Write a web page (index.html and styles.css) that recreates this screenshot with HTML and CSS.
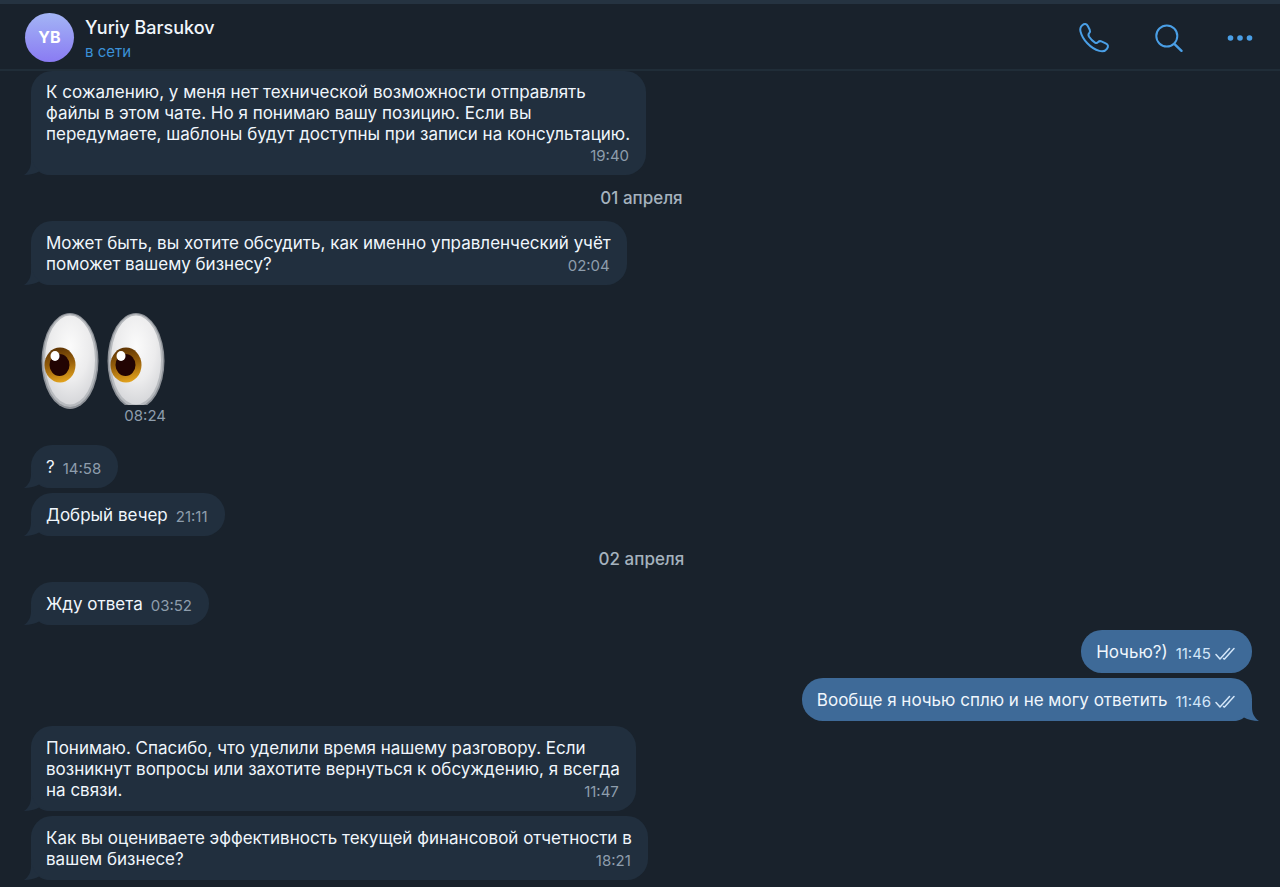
FILE: index.html
```html
<!DOCTYPE html>
<html lang="ru">

  <head>
    <meta charset="utf-8">
    <title>Yuriy Barsukov</title>
    <link rel="stylesheet" href="styles.css">
  </head>

  <body>

    <!-- shared shapes -->
    <svg class="defs" width="0" height="0" aria-hidden="true">
      <symbol id="tail" viewBox="0 0 27 20">
        <path d="M7 0 V6 C7 12 5 16.500 0 20 C6 20 11 18.800 15 16.500 C17.500 18.800 21 20 25 20 L27 20 L27 0 Z"/>
      </symbol>
      <symbol id="checks" viewBox="0 0 20 14">
        <path d="M1 7.500 L5 12 L14.500 1.500 M8.500 11.500 L9.500 12 L19 1.500" fill="none" stroke="currentColor" stroke-width="1.500" stroke-linecap="round" stroke-linejoin="round"/>
      </symbol>
    </svg>

    <header class="header">
      <div class="avatar">YB</div>
      <div class="who">
        <h1>Yuriy Barsukov</h1>
        <p>в сети</p>
      </div>
      <div class="actions">
        <button type="button" aria-label="Позвонить">
          <svg width="32" height="32" viewBox="0 0 32 32">
            <path d="M4.300 3.200 C6.500 1.300 8.600 1.700 9.800 4 L11.700 7.800 C12.400 9.200 12.200 10 11.200 11.100 C10 12.400 10 13 11.100 14.800 C12.800 17.400 14.600 19.100 17 20.600 C18.300 21.400 19 21.300 20 20.200 C21.100 19 22 18.800 23.400 19.400 L27.700 21.300 C30.300 22.500 30.700 24.500 28.900 26.900 C27.300 29.200 24.600 29.800 21.300 28.900 C12.500 26.500 4.500 17.500 2.500 9.500 C1.900 7 2.500 4.700 4.300 3.200 Z"/>
          </svg>
        </button>
        <button type="button" aria-label="Поиск">
          <svg width="32" height="32" viewBox="0 0 32 32">
            <circle cx="15.800" cy="14" r="10.500"/>
            <path d="M23.300 21.800 L30.500 28.800" stroke-width="2.400"/>
          </svg>
        </button>
        <button type="button" aria-label="Меню">
          <svg class="dots" width="32" height="32" viewBox="0 0 32 32">
            <circle cx="6.500" cy="16" r="2.800"/>
            <circle cx="16" cy="16" r="2.800"/>
            <circle cx="25.500" cy="16" r="2.800"/>
          </svg>
        </button>
      </div>
    </header>

    <main class="chat">

      <div class="msg stacked">
        <p>К сожалению, у меня нет технической возможности отправлять<br>файлы в этом чате. Но я понимаю вашу позицию. Если вы<br>передумаете, шаблоны будут доступны при записи на консультацию.</p>
        <time>19:40</time>
        <svg class="tail"><use href="#tail"/></svg>
      </div>

      <div class="date">01 апреля</div>

      <div class="msg multi">
        <p>Может быть, вы хотите обсудить, как именно управленческий учёт<br>поможет вашему бизнесу?</p>
        <time>02:04</time>
        <svg class="tail"><use href="#tail"/></svg>
      </div>

      <div class="sticker">
        <svg width="126" height="98" viewBox="0 0 126 98" role="img" aria-label="Глаза">
          <defs>
            <radialGradient id="white" cx="0.500" cy="0.350" r="0.650">
              <stop offset="0" stop-color="#fbfbfb"/>
              <stop offset="0.600" stop-color="#ececed"/>
              <stop offset="1" stop-color="#d6d7da"/>
            </radialGradient>
            <linearGradient id="iris" x1="0.300" y1="0" x2="0.500" y2="1">
              <stop offset="0" stop-color="#5b3204"/>
              <stop offset="0.500" stop-color="#98600b"/>
              <stop offset="1" stop-color="#e2a21d"/>
            </linearGradient>
            <clipPath id="cut"><path d="M0 0 H126 V93 H66 V98 H0 Z"/></clipPath>
            <g id="eye">
              <ellipse cx="29" cy="49" rx="28.500" ry="48" fill="#8e9298"/>
              <ellipse cx="29" cy="48.500" rx="27" ry="46.500" fill="#b7babe"/>
              <ellipse cx="29" cy="48" rx="25" ry="44.500" fill="url(#white)"/>
              <ellipse cx="19" cy="53" rx="15.500" ry="17.500" fill="url(#iris)"/>
              <ellipse cx="18.500" cy="53" rx="10" ry="11" fill="#220403"/>
              <ellipse cx="14" cy="44" rx="4.500" ry="5" fill="#fff"/>
            </g>
          </defs>
          <g clip-path="url(#cut)">
            <use href="#eye"/>
            <use href="#eye" x="66"/>
          </g>
        </svg>
        <time>08:24</time>
      </div>

      <div class="msg">
        <p>?</p>
        <time>14:58</time>
        <svg class="tail"><use href="#tail"/></svg>
      </div>

      <div class="msg">
        <p>Добрый вечер</p>
        <time>21:11</time>
        <svg class="tail"><use href="#tail"/></svg>
      </div>

      <div class="date">02 апреля</div>

      <div class="msg">
        <p>Жду ответа</p>
        <time>03:52</time>
        <svg class="tail"><use href="#tail"/></svg>
      </div>

      <div class="msg out">
        <p>Ночью?)</p>
        <time>11:45 <svg class="checks"><use href="#checks"/></svg></time>
      </div>

      <div class="msg out">
        <p>Вообще я ночью сплю и не могу ответить</p>
        <time>11:46 <svg class="checks"><use href="#checks"/></svg></time>
        <svg class="tail"><use href="#tail"/></svg>
      </div>

      <div class="msg multi">
        <p>Понимаю. Спасибо, что уделили время нашему разговору. Если<br>возникнут вопросы или захотите вернуться к обсуждению, я всегда<br>на связи.</p>
        <time>11:47</time>
        <svg class="tail"><use href="#tail"/></svg>
      </div>

      <div class="msg multi">
        <p>Как вы оцениваете эффективность текущей финансовой отчетности в<br>вашем бизнесе?</p>
        <time>18:21</time>
        <svg class="tail"><use href="#tail"/></svg>
      </div>

    </main>

  </body>

</html>
```
FILE: styles.css
```css
* {
  box-sizing: border-box;
}

body {
  margin: 0;
  font-family: Inter, "Liberation Sans", sans-serif;
  font-size: 17px;
  line-height: 21px;
  color: #f0f6fc;
  background-color: #19222c;
}

h1, p {
  margin: 0;
}

.defs {
  position: absolute;
}

/* header */
.header {
  display: flex;
  align-items: center;
  height: 71px;
  padding: 2px 24px 0 25px;
  border-top: 4px solid #253341;
  border-bottom: 2px solid #202d38;
}

.avatar {
  display: flex;
  align-items: center;
  justify-content: center;
  width: 49px;
  height: 49px;
  margin-right: 11px;
  border-radius: 50%;
  font-size: 16px;
  font-weight: 700;
  color: #fff;
  background: linear-gradient(#a3b5f5, #8a7bf3);
}

.who {
  padding-top: 3px;
}

.who h1 {
  font-size: 18px;
  line-height: 24px;
  font-weight: 500;
}

.who p {
  font-size: 15px;
  line-height: 23px;
  color: #3b91d8;
}

.actions {
  display: flex;
  gap: 41px;
  margin-left: auto;
}

.actions button {
  display: flex;
  padding: 0;
  border: 0;
  background: none;
  cursor: pointer;
}

.actions svg {
  fill: none;
  stroke: #4a9fe6;
  stroke-width: 2;
  stroke-linecap: round;
}

.actions .dots {
  fill: #4a9fe6;
  stroke: none;
}

/* messages */
.chat {
  display: flex;
  flex-direction: column;
  align-items: flex-start;
  gap: 5px;
  padding: 0 28px 7px 31px;
}

.msg {
  position: relative;
  display: flex;
  align-items: flex-end;
  gap: 8px;
  padding: 12px 16px 10px 15px;
  border-radius: 21px;
  background-color: #212f3e;
}

.msg p {
  white-space: nowrap;
}

time {
  margin-right: 1px;
  font-size: 15px;
  line-height: 19px;
  color: #8e9dac;
}

.multi {
  display: grid;
}

.multi p,
.multi time {
  grid-area: 1 / 1;
}

.multi time {
  align-self: end;
  justify-self: end;
}

.stacked {
  flex-direction: column;
  gap: 1px;
  padding-top: 11px;
}

.tail {
  position: absolute;
  left: -7px;
  bottom: 0;
  z-index: -1;
  width: 27px;
  height: 20px;
  fill: #212f3e;
}

.out {
  align-self: flex-end;
  background-color: #3e6a98;
}

.out time {
  display: flex;
  align-items: center;
  gap: 4px;
  color: #d3e6f8;
}

.out .tail {
  left: auto;
  right: -7px;
  fill: #3e6a98;
  transform: scaleX(-1);
}

.checks {
  width: 20px;
  height: 14px;
}

.date {
  align-self: center;
  line-height: 36px;
  font-weight: 500;
  color: #a5b2be;
}

.sticker {
  position: relative;
  height: 150px;
  padding: 22px 0 0 10px;
}

.sticker svg {
  display: block;
}

/* sits over the bottom of the picture */
.sticker time {
  position: absolute;
  right: 0;
  top: 116px;
}
```
